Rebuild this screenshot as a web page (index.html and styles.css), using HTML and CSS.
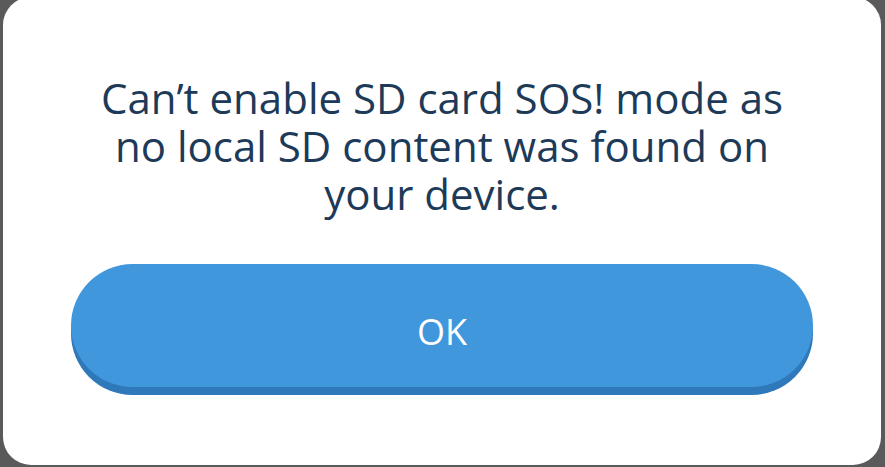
FILE: index.html
```html
<!DOCTYPE html>
<html>
<head>
<meta charset="utf-8">
<link rel="stylesheet" href="styles.css">
</head>
<body>
<div class="dialog">
  <p class="message">Can’t enable SD card SOS! mode as<br>no local SD content was found on<br>your device.</p>
  <button class="ok">OK</button>
</div>
</body>
</html>
```
FILE: styles.css
```css
html, body {
  margin: 0;
  padding: 0;
  background: #5a5a5a;
  width: 885px;
  height: 467px;
  overflow: hidden;
}
.dialog {
  box-sizing: border-box;
  margin: -3px 4px 0 3px;
  height: 468px;
  background: #ffffff;
  border-radius: 28px;
  padding: 77px 0 0 0;
  display: flex;
  flex-direction: column;
  align-items: center;
}
.message {
  margin: 0;
  font-family: "Open Sans", sans-serif;
  font-size: 42px;
  line-height: 48px;
  color: #1d3a58;
  text-align: center;
  white-space: nowrap;
}
.ok {
  margin-top: 46px;
  width: 742px;
  height: 123px;
  border: none;
  border-radius: 62px;
  background: #4097dc;
  box-shadow: 0 8px 0 #2f78ba;
  color: #ffffff;
  font-family: "Open Sans", sans-serif;
  font-size: 36px;
  padding: 12px 0 0 0;
}
```
